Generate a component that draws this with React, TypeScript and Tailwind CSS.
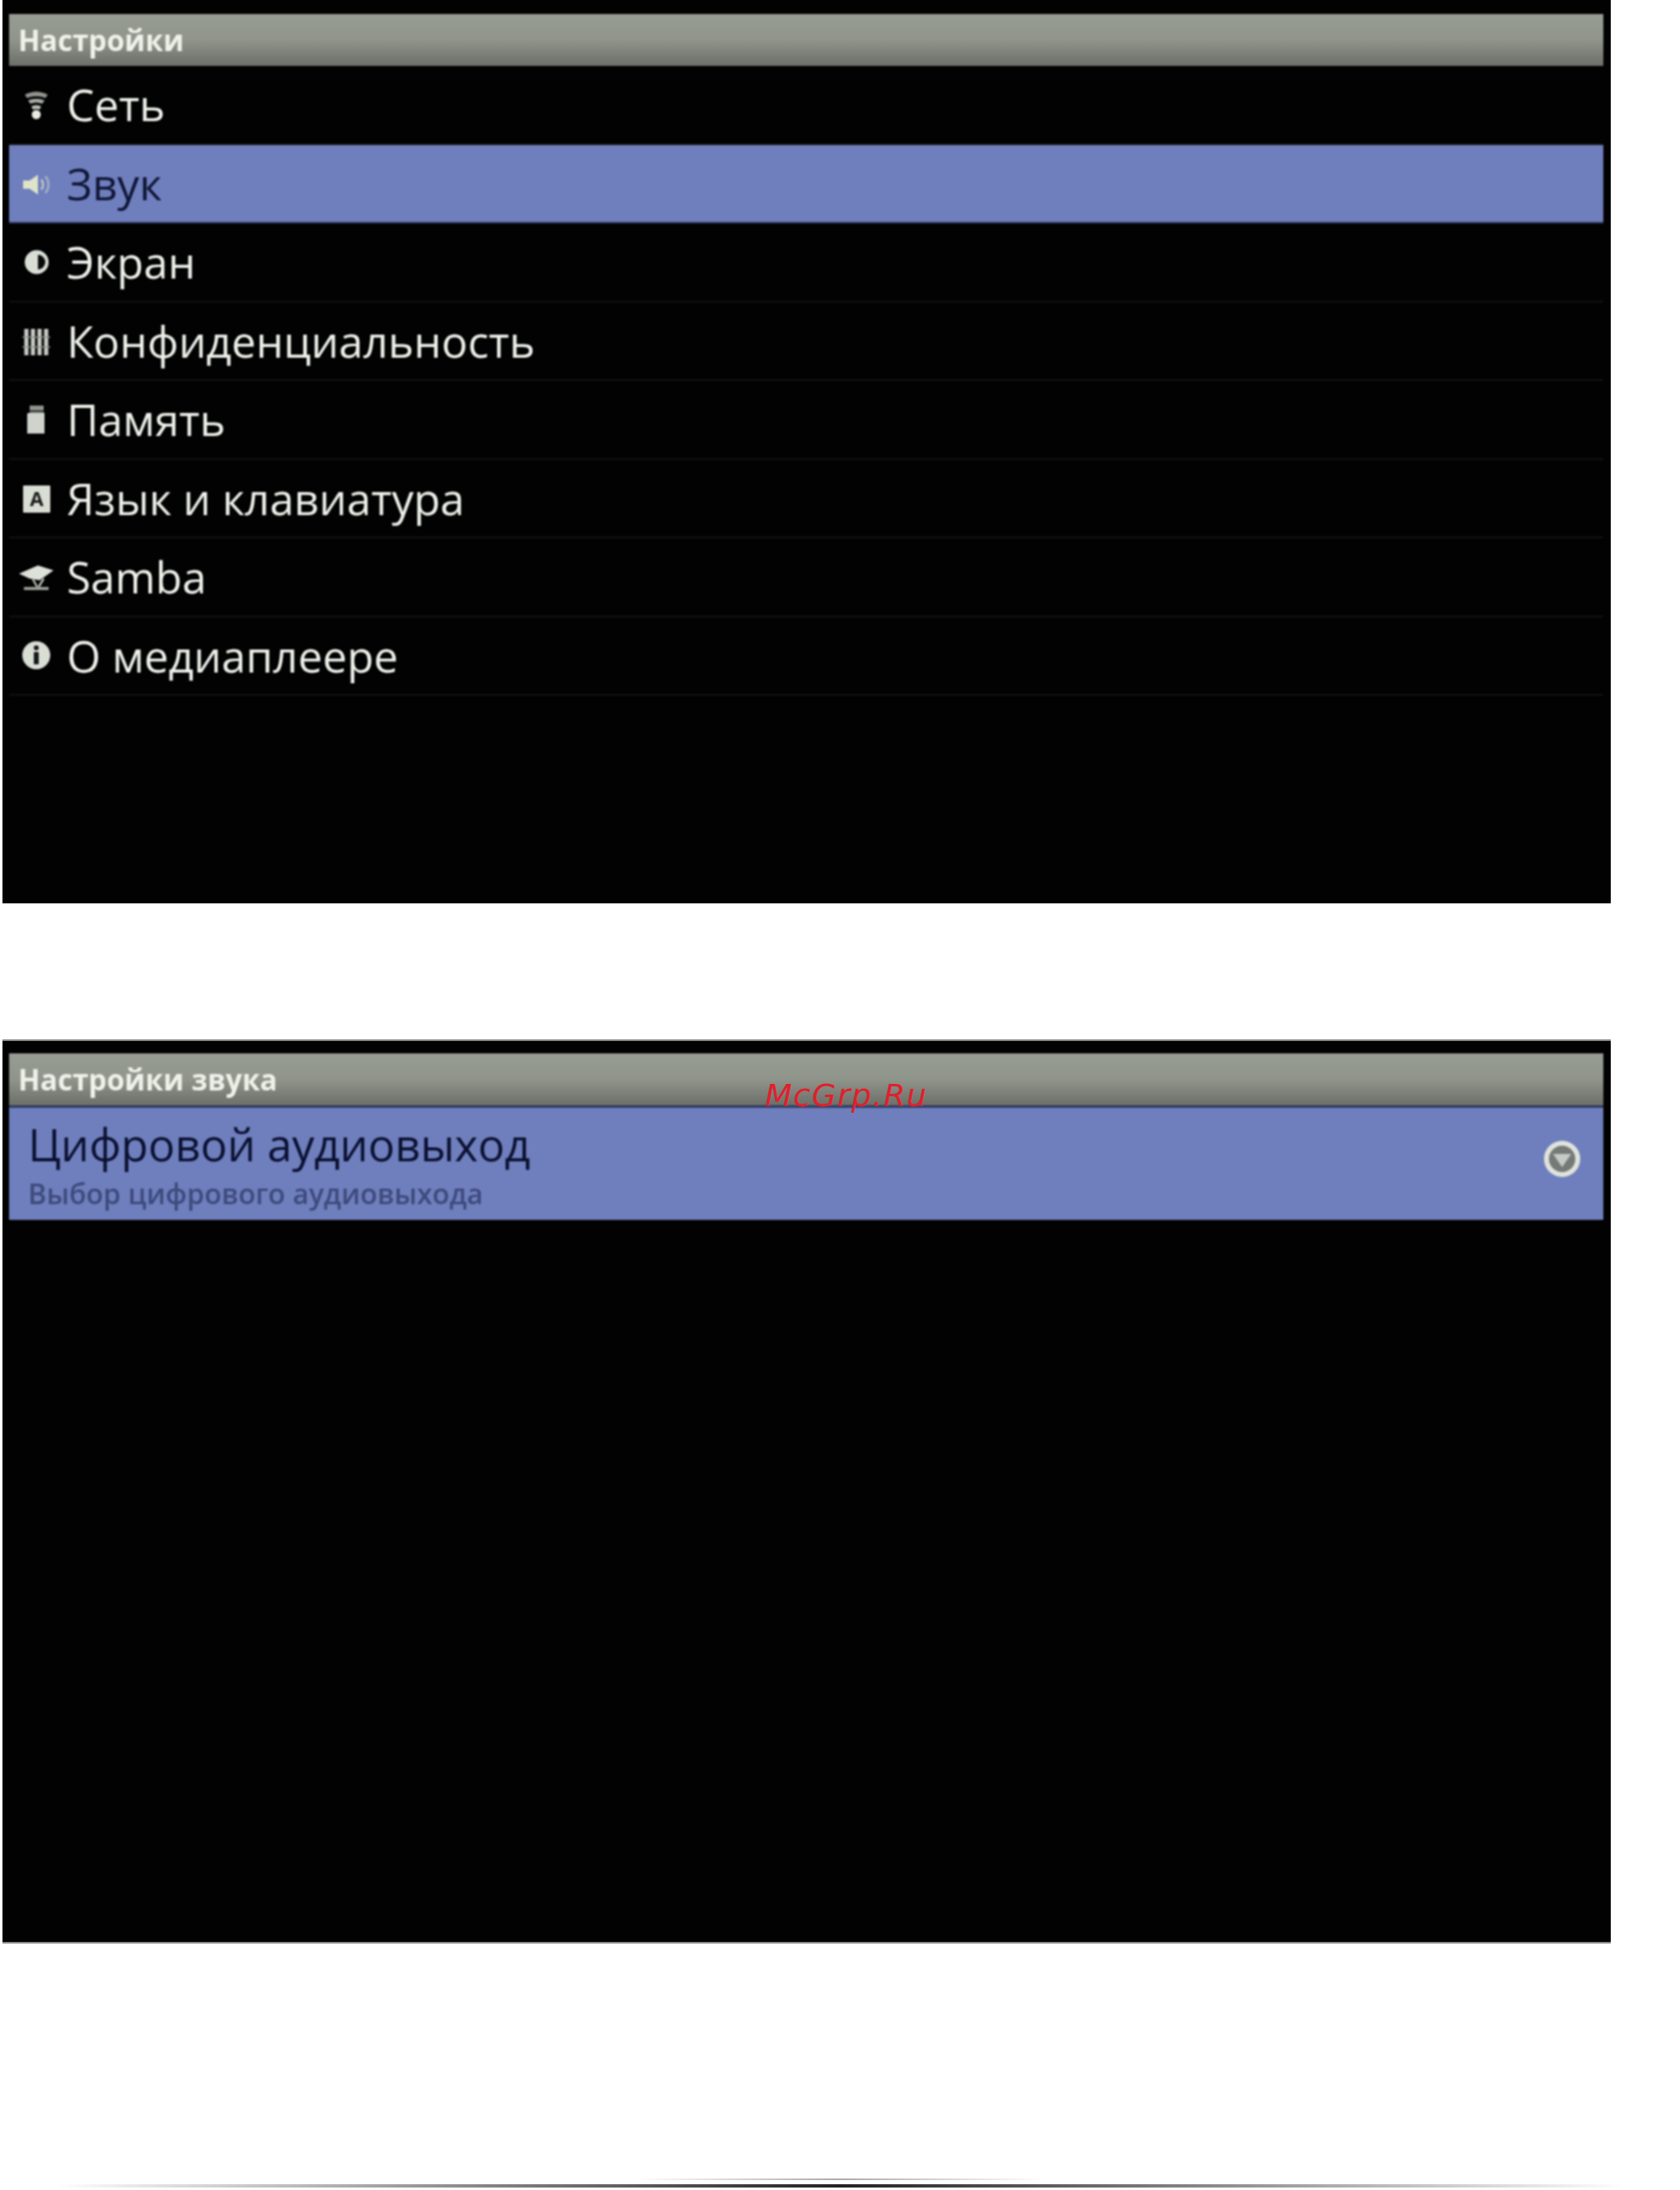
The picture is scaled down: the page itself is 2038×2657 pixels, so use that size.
import type { ReactNode } from 'react';

const ICON = '#d9ded5';

const Icon = ({ children }: { children: ReactNode }) => (
  <svg viewBox="0 0 44 44" className="w-[44px] h-[44px] shrink-0 ml-[11px] mr-[15px] mt-[3px]">
    {children}
  </svg>
);

const WifiIcon = () => (
  <Icon>
    <path d="M8 9 C17 4 27 4 36 9 L33 13 C26 10 18 10 11 13 Z" fill="#8f938c" />
    <path d="M12 16 C18 13 26 13 32 16 L29 20 C25 18 19 18 15 20 Z" fill="#a6aaa2" />
    <path d="M16 23 C20 21 24 21 28 23 L26 27 C24 26 20 26 18 27 Z" fill="#bcc0b8" />
    <circle cx="22" cy="33" r="5.5" fill="#e8ebe4" />
  </Icon>
);

const SoundIcon = () => (
  <Icon>
    <path d="M6 17 H14 L24 10 V34 L14 27 H6 Z" fill="#dfe3c8" />
    <path d="M28 16 C31 19 31 25 28 28" fill="none" stroke="#c2c8c4" strokeWidth="2.5" />
    <path d="M33 12 C38 17 38 27 33 32" fill="none" stroke="#a9b2c4" strokeWidth="2.5" />
  </Icon>
);

const ContrastIcon = () => (
  <Icon>
    <circle cx="22.5" cy="21" r="14.5" fill={ICON} />
    <path d="M24 12 A9 9 0 0 1 24 30 Z" fill="#0a0a0a" />
  </Icon>
);

const PrivacyIcon = () => (
  <Icon>
    <path d="M10 6 V38 M18 6 V38 M26 6 V38 M34 6 V38" stroke="#c9cdc5" strokeWidth="5" />
    <path d="M5 16 H39 M5 28 H39" stroke="#8d918a" strokeWidth="1.5" />
  </Icon>
);

const MemoryIcon = () => (
  <Icon>
    <rect x="14" y="4" width="17" height="6" fill="#8f938c" />
    <path d="M12 13 H32 V38 H11 V14 Z" fill="#cfd3cb" />
    <rect x="14" y="11" width="17" height="2" fill="#70746e" />
  </Icon>
);

const KeyboardIcon = () => (
  <Icon>
    <rect x="6" y="5" width="33" height="33" rx="1" fill={ICON} />
    <text x="22.5" y="30" textAnchor="middle" fontSize="24" fontWeight="700" fontFamily="'Open Sans', sans-serif" fill="#1b1c1a">
      A
    </text>
  </Icon>
);

const SambaIcon = () => (
  <Icon>
    <path d="M1 17 L24 7 L43 13 L26 25 L14 23 Z" fill="#dde1d9" />
    <path d="M18 24 L23 33 M31 23 L25 33" stroke="#b9bdb5" strokeWidth="2.5" />
    <path d="M7 35 H37" stroke="#a5a9a1" strokeWidth="3.5" />
  </Icon>
);

const InfoIcon = () => (
  <Icon>
    <circle cx="22" cy="20" r="17" fill={ICON} />
    <rect x="19" y="8" width="6" height="6" rx="3" fill="#16171a" />
    <rect x="19" y="16" width="6" height="15" rx="1" fill="#16171a" />
  </Icon>
);

const rows = [
  { label: 'Сеть', icon: <WifiIcon />, selected: false },
  { label: 'Звук', icon: <SoundIcon />, selected: true },
  { label: 'Экран', icon: <ContrastIcon />, selected: false },
  { label: 'Конфиденциальность', icon: <PrivacyIcon />, selected: false },
  { label: 'Память', icon: <MemoryIcon />, selected: false },
  { label: 'Язык и клавиатура', icon: <KeyboardIcon />, selected: false },
  { label: 'Samba', icon: <SambaIcon />, selected: false },
  { label: 'О медиаплеере', icon: <InfoIcon />, selected: false },
];

const Header = ({ title }: { title: string }) => (
  <div className="h-[63px] flex items-center pl-[11px] pt-[1px] bg-gradient-to-b from-[#989d93] via-[#90958b] to-[#6d6f69] text-[35px] font-bold text-[#eff1eb]">
    {title}
  </div>
);

export default function App() {
  return (
    <div className="relative h-[2657px] bg-white flex flex-col overflow-hidden font-['Open_Sans',sans-serif]">
      {/* Settings screen */}
      <div className="ml-[3px] w-[1951px] h-[1096px] shrink-0 bg-[#020203] pt-[17px] pl-[8px] pr-[9px]">
        <div className="blur-[1px]">
          <Header title="Настройки" />
          {rows.map((row) => (
            <div
              key={row.label}
              className={`h-[95.5px] flex items-center text-[53px] leading-none border-b-2 ${
                row.selected
                  ? 'bg-[#6f7fbd] text-[#0f1535] border-[#3a4468]'
                  : 'text-[#eef2ea] border-[#12140f]'
              }`}
            >
              {row.icon}
              <span>{row.label}</span>
            </div>
          ))}
        </div>
      </div>

      {/* Sound settings screen */}
      <div className="mt-[165px] ml-[3px] w-[1951px] h-[1097px] shrink-0 bg-[#020203] border-y-2 border-[#8a8a8a] pt-[15px] pl-[8px] pr-[9px]">
        <div className="blur-[1px]">
          <Header title="Настройки звука" />
          <div className="h-[139px] flex items-center justify-between bg-[#6f7fbd] border-t-[3px] border-[#2f3a60] pl-[23px] pr-[26px]">
            <div className="flex flex-col pt-[10px]">
              <span className="text-[54px] leading-[62px] text-[#0a1030]">Цифровой аудиовыход</span>
              <span className="text-[34px] leading-[58px] font-semibold text-[#3d4a7c]">Выбор цифрового аудиовыхода</span>
            </div>
            <svg viewBox="0 0 48 48" className="w-[48px] h-[48px] shrink-0 mb-[12px]">
              <circle cx="24" cy="24" r="22" fill="#dfe3dc" />
              <circle cx="24" cy="24" r="16" fill="#767a76" />
              <path d="M13 18 H35 L24 34 Z" fill="#c6cac6" />
            </svg>
          </div>
        </div>
      </div>

      {/* Watermark */}
      <span className="absolute left-[928px] top-[1306px] text-[38px] leading-[46px] tracking-[1.5px] italic text-[#e0202c] font-['DejaVu_Sans',sans-serif]">
        McGrp.Ru
      </span>

      {/* Page fold at the very bottom */}
      <div className="mt-auto mx-auto h-[2px] w-[500px] bg-gradient-to-r from-transparent via-[#aaaaaa] to-transparent" />
      <div className="mt-[5px] mb-[3px] h-[4px] mx-[65px] bg-gradient-to-r from-transparent via-[#222222] to-transparent" />
    </div>
  );
}
